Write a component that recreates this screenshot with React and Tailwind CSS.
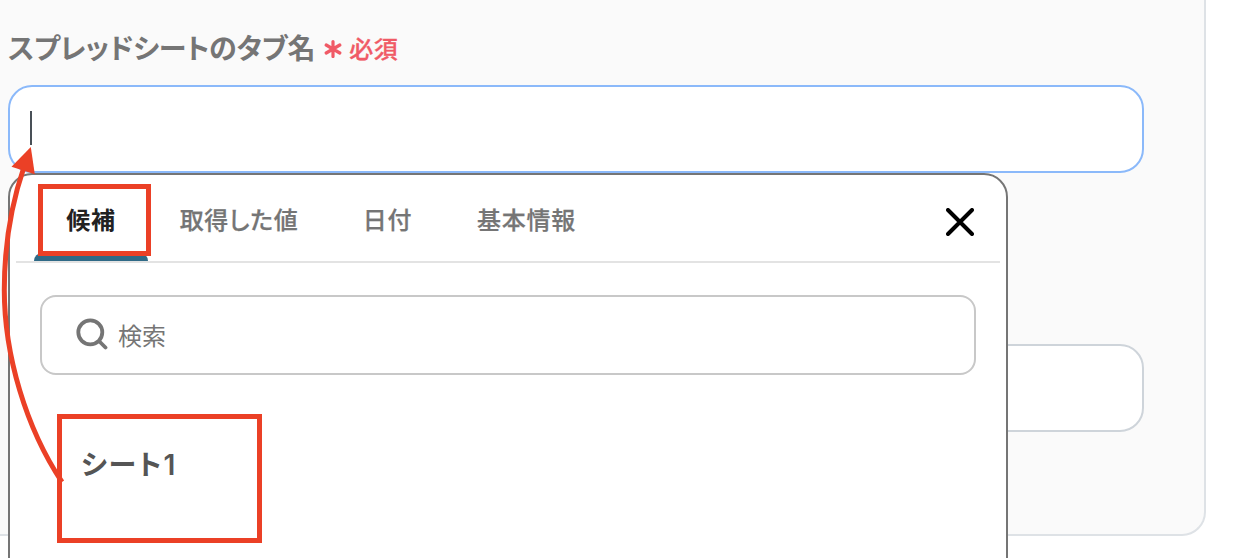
import React, { useState } from 'react';

const TABS = ['候補', '取得した値', '日付', '基本情報'];

const tabWidths = ['w-[114px]', 'w-[182px]', 'w-[115px]', 'w-[163px]'];

const RequiredMark = () => (
    <div className="flex items-center text-[#f05a66] ml-[9px] pt-[3px]">
        <svg className="w-[18px] h-[20px]" viewBox="0 0 18 20" fill="none" stroke="currentColor" strokeWidth="3.2" strokeLinecap="round">
            <path d="M9 3.5v15M2.2 7l13.6 8M15.8 7l-13.6 8" />
        </svg>
        <span className="ml-[7px] text-[24px] leading-6 font-medium tracking-[0.5px] [-webkit-text-stroke:0.3px]">必須</span>
    </div>
);

const SearchBox = () => (
    <div className="mt-8 mx-[30px] h-20 flex items-center border-2 border-[#c8c8c8] rounded-[16px] pl-[34px] pb-0.5">
        <svg className="w-8 h-8 text-[#757575]" viewBox="0 0 32 32" fill="none" stroke="currentColor" strokeWidth="3.8" strokeLinecap="round">
            <circle cx="14.3" cy="14.3" r="12" />
            <path d="M23.5 23.5l6 6" />
        </svg>
        <span className="ml-2.5 pt-0.5 text-[24px] leading-6 text-[#757575]">検索</span>
    </div>
);

const CandidateMenu = () => {
    const [active, setActive] = useState(0);

    return (
        <div className="absolute left-2 top-[173px] w-[1000px] h-[420px] bg-white border-2 border-[#757575] rounded-[24px]">
            <div className="mx-1.5 h-[88px] flex border-b-2 border-[#e3e3e3] pl-[18px] pr-[26px]">
                {TABS.map((tab, i) => (
                    <button
                        key={tab}
                        type="button"
                        onClick={() => setActive(i)}
                        className={`${tabWidths[i]} flex flex-col items-center text-[24px] leading-6 tracking-[0.7px] whitespace-nowrap ${active === i ? 'font-bold text-[#222222]' : 'font-medium text-[#757575] [-webkit-text-stroke:0.25px]'}`}
                    >
                        <span className="pt-8 [font-feature-settings:'palt']">{tab}</span>
                        {active === i && <span className="mt-auto w-full h-2 bg-[#2f6a87] rounded-t-[8px]" />}
                    </button>
                ))}
                <button type="button" className="ml-auto h-[94px] flex items-center">
                    <svg className="w-7 h-7" viewBox="0 0 28 28" fill="none" stroke="#000" strokeWidth="4" strokeLinecap="round">
                        <path d="M2 2l24 24M26 2L2 26" />
                    </svg>
                </button>
            </div>
            <SearchBox />
            <div className="mt-[74px] pl-[71px] text-[28px] leading-7 font-bold text-[#555555] tracking-[2px] [font-feature-settings:'palt']">
                シート<span className="font-['Inter',sans-serif] font-semibold">1</span>
            </div>
        </div>
    );
};

const Annotations = () => (
    <>
        <div className="absolute left-[38px] top-[184px] w-[113px] h-[72px] border-5 border-[#eb4026]" />
        <div className="absolute left-[57px] top-[414px] w-[205px] h-[129px] border-5 border-[#eb4026]" />
        <svg className="absolute left-0 top-[140px] w-[80px] h-[350px]" viewBox="0 140 80 350">
            <path d="M62 482C26 428 4.3 355 4.3 290C4.3 245 11 205 24 167" fill="none" stroke="#eb4026" strokeWidth="5" />
            <path d="M30.8 147L11.5 166.8L34.8 174.3Z" fill="#eb4026" />
        </svg>
    </>
);

const App = () => {
    return (
        <div className="relative w-[1248px] h-[558px] overflow-hidden bg-white font-['Noto_Sans_CJK_JP',sans-serif]">
            <div className="w-[1206px] h-[536px] bg-[#fafafa] border-r-2 border-b-2 border-[#dee2e6] rounded-br-[24px] pl-2">
                <div className="h-[85px] flex items-center pt-2">
                    <span className="text-[28px] leading-7 font-bold text-[#757575] tracking-[-0.25px] [font-feature-settings:'palt']">スプレッドシートのタブ名</span>
                    <RequiredMark />
                </div>
                <div className="w-[1136px] h-[88px] flex pt-6 pl-5 bg-white border-2 border-[#8bb9fa] rounded-[24px]">
                    <div className="w-0.5 h-[34px] bg-[#495057]" />
                </div>
                <div className="mt-[171px] w-[1136px] h-[88px] bg-white border-2 border-[#ced4da] rounded-[24px]" />
            </div>
            <CandidateMenu />
            <Annotations />
        </div>
    );
};

export default App;
